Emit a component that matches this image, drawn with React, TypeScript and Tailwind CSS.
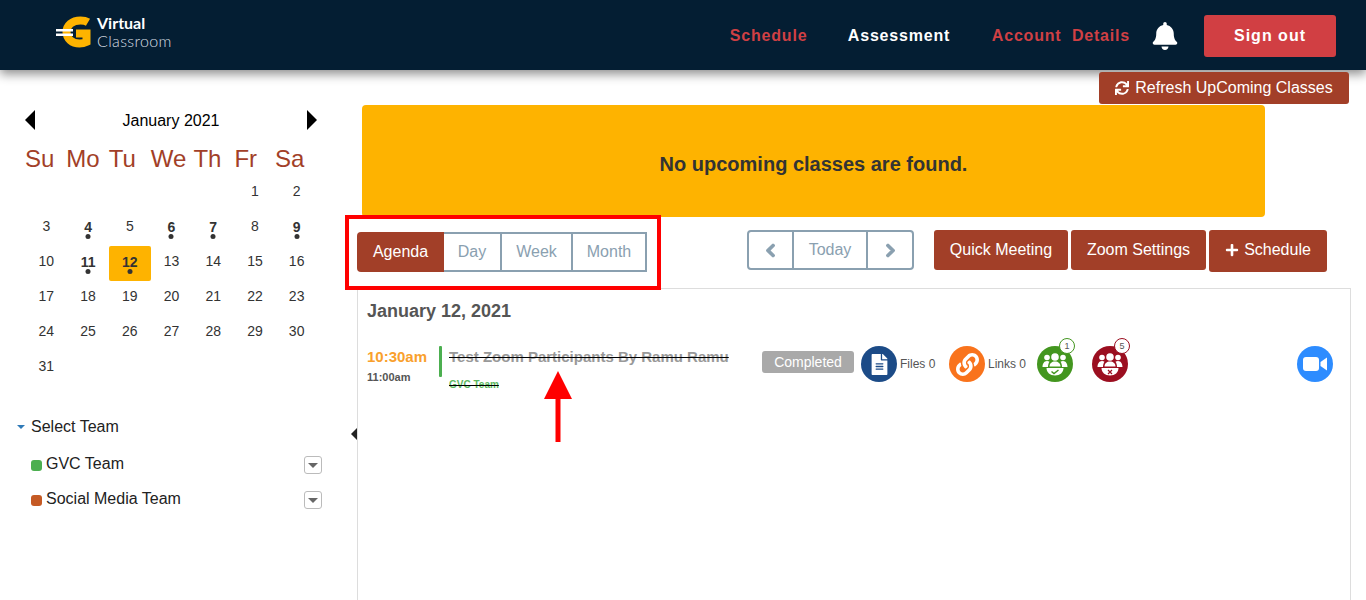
import React from "react";
import {
  FaBell,
  FaChevronLeft,
  FaChevronRight,
  FaFileAlt,
  FaLink,
  FaPlus,
  FaSync,
} from "react-icons/fa";

const dayHeads = [
  { label: "Su", cls: "ml-0" },
  { label: "Mo", cls: "ml-[12px]" },
  { label: "Tu", cls: "ml-[9px]" },
  { label: "We", cls: "ml-[15px]" },
  { label: "Th", cls: "ml-[7px]" },
  { label: "Fr", cls: "ml-[13px]" },
  { label: "Sa", cls: "ml-[18px]" },
];

const busyDays = [4, 6, 7, 9, 11, 12];
const cells: (number | null)[] = [
  null, null, null, null, null,
  ...Array.from({ length: 31 }, (_, i) => i + 1),
];

const Logo = () => (
  <div className="flex items-center gap-[5px] mb-[8px]">
    <svg width="36" height="32" viewBox="0 0 36 32">
      <path
        d="M32 6.200C30 5 27.500 4.500 24.500 4.500C16 4.500 10.500 9.500 10.500 16C10.500 22.500 16 27.500 23.500 27.500C26 27.500 28.500 27 30.500 26V17.500H20"
        fill="none"
        stroke="#feb300"
        strokeWidth="8"
      />
      <rect x="0" y="13" width="17" height="2.500" fill="#ffffff" />
      <rect x="0" y="17.500" width="17" height="2.500" fill="#ffffff" />
    </svg>
    <div className="font-['Lato',sans-serif] text-[16px] leading-[18px]">
      <div className="font-bold text-white">Virtual</div>
      <div className="font-light text-[#d7dde2] tracking-[0.35px]">Classroom</div>
    </div>
  </div>
);

const Header = () => (
  <header className="h-[70px] pt-[2px] bg-[#041e33] shadow-[0_4px_10px_rgba(0,0,0,0.45)] flex items-center pl-[56px] pr-[30px] relative z-10">
    <Logo />
    <nav className="ml-auto flex items-center text-[16px] font-bold tracking-[0.8px]">
      <a className="text-[#d04044] w-[118px]">Schedule</a>
      <a className="text-white w-[144px]">Assessment</a>
      <a className="text-[#d04044] whitespace-pre">Account  Details</a>
    </nav>
    <FaBell className="text-white ml-[21px] text-[28px]" />
    <button className="ml-[25px] w-[132px] h-[42px] rounded-[3px] bg-[#d13f43] text-white text-[16px] font-bold tracking-[1px]">
      Sign out
    </button>
  </header>
);

const Calendar = () => (
  <div className="pl-[25px] w-[292px] box-content">
    <div className="flex items-center justify-between h-[20px] mt-[40px]">
      <span className="border-y-[10px] border-y-transparent border-r-[10px] border-r-black" />
      <span className="text-[16px] text-black mt-[1px]">January 2021</span>
      <span className="border-y-[10px] border-y-transparent border-l-[10px] border-l-black" />
    </div>
    <div className="flex mt-[15px] h-[28px] items-center text-[24px] leading-[28px] text-[#a23f28]">
      {dayHeads.map((d) => (
        <span key={d.label} className={d.cls}>
          {d.label}
        </span>
      ))}
    </div>
    <div className="grid grid-cols-7 mt-[3px] ml-[0.5px] w-[292px]">
      {cells.map((n, i) => {
        const busy = n !== null && busyDays.includes(n);
        const today = n === 12;
        return (
          <div
            key={i}
            className={`relative h-[35px] flex items-center justify-center text-[14px] text-[#333] ${
              busy ? "font-bold pb-[3px]" : "pb-[5px]"
            } ${today ? "bg-[#feb300] rounded-[2px]" : ""}`}
          >
            {n}
            {busy && (
              <span className="absolute left-1/2 -translate-x-1/2 bottom-[7px] w-[5px] h-[5px] rounded-full bg-[#333]" />
            )}
          </div>
        );
      })}
    </div>
  </div>
);

const TeamRow = ({ name, color }: { name: string; color: string }) => (
  <div className="flex items-center h-[35px] pl-[31px] w-[322px] text-[16px] text-[#222]">
    <span className={`w-[11px] h-[11px] rounded-[3px] mt-[4px] mr-[4px] ${color}`} />
    <span>{name}</span>
    <span className="ml-auto w-[18px] h-[18px] border border-[#bbb] rounded-[3px] flex items-center justify-center mt-[3px]">
      <span className="border-x-[5px] border-x-transparent border-t-[5px] border-t-[#666]" />
    </span>
  </div>
);

const Sidebar = () => (
  <aside className="w-[357px] shrink-0 relative">
    <Calendar />
    <div className="mt-[31px] ml-[17px] flex items-center h-[20px] text-[16px] text-[#222]">
      <span className="border-x-[4px] border-x-transparent border-t-[4px] border-t-[#2f7ab8] mr-[6px]" />
      Select Team
    </div>
    <div className="mt-[9px]">
      <TeamRow name="GVC Team" color="bg-[#4caf50]" />
      <TeamRow name="Social Media Team" color="bg-[#c55a24]" />
    </div>
    <span className="absolute right-0 top-[358px] border-y-[6px] border-y-transparent border-r-[6px] border-r-[#222]" />
  </aside>
);

const GroupIcon = ({ mark }: { mark: "check" | "cross" }) => (
  <svg width="26" height="24" viewBox="0 0 26 24" fill="#ffffff">
    <circle cx="5" cy="5.500" r="2.800" />
    <circle cx="21" cy="5.500" r="2.800" />
    <circle cx="13" cy="5" r="3.800" />
    <path d="M.5 15c0-3 1.500-6 4.500-6c1 0 1.800.2 2.500.7C6.500 11 6 13 6 15z" />
    <path d="M25.500 15c0-3-1.500-6-4.500-6c-1 0-1.800.2-2.500.7c1 1.300 1.500 3.300 1.500 5.300z" />
    <path d="M7.500 14.500c0-3 2.300-5 5.500-5s5.500 2 5.500 5z" />
    <path d="M4.500 16h17c0 4.500-3.500 7.500-8.500 7.500s-8.500-3-8.500-7.500z" />
    {mark === "check" ? (
      <path d="M9.500 19.500l2.500 2l4.500-3.500" fill="none" stroke="#43961f" strokeWidth="1.500" />
    ) : (
      <path d="M11 18l4 4m0-4l-4 4" fill="none" stroke="#9b0e20" strokeWidth="1.200" />
    )}
  </svg>
);

const Circle = ({
  color,
  className = "",
  children,
}: {
  color: string;
  className?: string;
  children: React.ReactNode;
}) => (
  <div
    className={`relative w-[36px] h-[36px] rounded-full flex items-center justify-center shrink-0 ${color} ${className}`}
  >
    {children}
  </div>
);

const CountBadge = ({ n, color }: { n: number; color: string }) => (
  <span
    className={`absolute -top-[8px] -right-[2px] w-[16px] h-[16px] rounded-full bg-white border text-[9px] leading-[14px] text-center text-[#555] ${color}`}
  >
    {n}
  </span>
);

const Toolbar = () => (
  <div className="flex items-start pt-[15px] h-[71px]">
    <div className="flex h-[40px] text-[16px] text-[#8aa0b0]">
      <button className="w-[87px] bg-[#a23f28] text-white rounded-l-[4px]">Agenda</button>
      <button className="w-[58px] border-2 border-l-0 border-[#8aa0b0]">Day</button>
      <button className="w-[71px] border-2 border-l-0 border-[#8aa0b0]">Week</button>
      <button className="w-[74px] border-2 border-l-0 border-[#8aa0b0]">Month</button>
    </div>
    <div className="ml-[100px] -mt-[2px] flex h-[40px] w-[167px] border-2 border-[#8aa0b0] rounded-[4px] text-[16px] text-[#8aa0b0]">
      <span className="w-[45px] flex items-center justify-center border-r-2 border-[#8aa0b0]">
        <FaChevronLeft className="text-[15px] stroke-[40]" />
      </span>
      <span className="flex-1 flex items-center justify-center">Today</span>
      <span className="w-[46px] flex items-center justify-center border-l-2 border-[#8aa0b0]">
        <FaChevronRight className="text-[15px] stroke-[40]" />
      </span>
    </div>
    <div className="ml-[20px] -mt-[2px] flex gap-[3px] text-[16px] text-white">
      <button className="w-[134px] h-[40px] bg-[#a23f28] rounded-[3px]">Quick Meeting</button>
      <button className="w-[135px] h-[40px] bg-[#a23f28] rounded-[3px]">Zoom Settings</button>
      <button className="w-[118px] h-[42px] pb-[2px] bg-[#a23f28] rounded-[3px] flex items-center justify-center gap-[5px]">
        <FaPlus className="text-[14px]" />
        Schedule
      </button>
    </div>
  </div>
);

const AgendaRow = () => (
  <div className="flex items-start mt-[24px] pl-[9px]">
    <div className="w-[72px] font-bold">
      <div className="text-[15px] leading-[18px] mt-[2px] text-[#f9a02c]">10:30am</div>
      <div className="text-[11px] leading-[14px] mt-[4px] text-[#555]">11:00am</div>
    </div>
    <div className="w-[3px] h-[31px] bg-[#4caf50] rounded-[1px]" />
    <div className="ml-[7px] w-[313px] font-bold line-through">
      <div className="text-[15px] leading-[18px] mt-[2px] text-[#999]">
        Test Zoom Participants By Ramu Ramu
      </div>
      <div className="text-[10px] leading-[12px] mt-[13px] text-[#5cb860]">GVC Team</div>
    </div>
    <span className="mt-[5px] w-[92px] h-[22px] rounded-[3px] bg-[#a9a9a9] text-white text-[14px] leading-[22px] text-center">
      Completed
    </span>
    <Circle color="bg-[#1c4b87]" className="ml-[7px]">
      <FaFileAlt className="text-white text-[21px]" />
    </Circle>
    <span className="ml-[3px] w-[49px] mt-[11px] text-[12px] leading-[14px] text-[#555]">Files 0</span>
    <Circle color="bg-[#f9731c]">
      <FaLink className="text-white text-[23px]" />
    </Circle>
    <span className="ml-[3px] w-[49px] mt-[11px] text-[12px] leading-[14px] text-[#555]">Links 0</span>
    <Circle color="bg-[#43961f]">
      <GroupIcon mark="check" />
      <CountBadge n={1} color="border-[#43961f]" />
    </Circle>
    <Circle color="bg-[#9b0e20]" className="ml-[19px]">
      <GroupIcon mark="cross" />
      <CountBadge n={5} color="border-[#9b0e20]" />
    </Circle>
    <Circle color="bg-[#2d8cff]" className="ml-[169px]">
      <svg width="24" height="14" viewBox="0 0 24 14" fill="#ffffff">
        <rect x="0" y="0" width="16" height="14" rx="3" />
        <path d="M17.500 5L24 .5v13L17.500 9z" />
      </svg>
    </Circle>
  </div>
);

const Main = () => (
  <main className="flex-1 min-w-0 pr-[15px]">
    <div className="flex justify-end pt-[2px]">
      <button className="mr-[2px] w-[250px] h-[32px] bg-[#a23f28] text-white text-[16px] rounded-[3px] flex items-center justify-center gap-[6px] relative z-20">
        <FaSync className="text-[14px]" />
        Refresh UpComing Classes
      </button>
    </div>
    <div className="ml-[5px] w-[903px] h-[112px] pt-[6px] mt-[1px] bg-[#feb300] rounded-[4px] flex items-center justify-center text-[20px] font-bold text-[#333]">
      No upcoming classes are found.
    </div>
    <Toolbar />
    <section className="w-[994px] h-[320px] border border-b-0 border-[#ddd]">
      <h2 className="pl-[9px] pt-[12px] text-[18px] leading-[21px] font-bold text-[#555]">January 12, 2021</h2>
      <AgendaRow />
    </section>
  </main>
);

export default function App() {
  return (
    <div className="relative w-[1366px] h-[600px] overflow-hidden bg-white font-['Liberation_Sans',Arial,sans-serif]">
      <Header />
      <div className="flex">
        <Sidebar />
        <Main />
      </div>
      {/* annotation drawn over the screenshot */}
      <div className="absolute left-[345px] top-[215px] w-[316px] h-[75px] border-4 border-[#ff0000] pointer-events-none" />
      <svg className="absolute left-[543px] top-[370px]" width="30" height="74" viewBox="0 0 30 74">
        <path d="M15 1L29 29H1z" fill="#ff0000" />
        <rect x="12.500" y="28" width="5" height="44" fill="#ff0000" />
      </svg>
    </div>
  );
}
